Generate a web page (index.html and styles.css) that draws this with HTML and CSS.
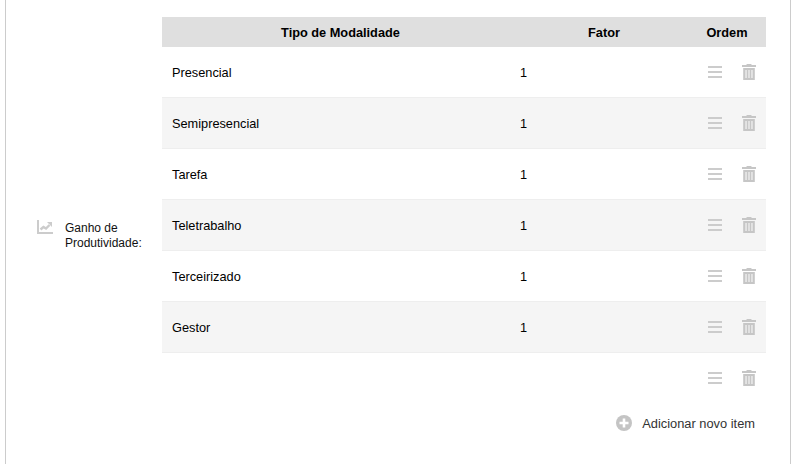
FILE: index.html
```html
<!DOCTYPE html>
<html lang="en">
<head>
    <meta charset="UTF-8">
    <meta name="viewport" content="width=device-width, initial-scale=1.0">
    <title>Ganho de Produtividade</title>
    <link rel="stylesheet" href="styles.css">
</head>
<body>
    <svg class="defs" width="0" height="0" aria-hidden="true">
        <symbol id="bars" viewBox="0 0 14 12">
            <path d="M0 0h14v2H0zM0 5h14v2H0zM0 10h14v2H0z"/>
        </symbol>
        <symbol id="trash" viewBox="0 0 14 16">
            <path d="M4.800 0h4.400l.5 1H14v2H0V1h4.300zM1.200 4h11.600v12H1.200z"/>
            <path d="M3.200 6h1.700v8H3.200zM6.150 6h1.700v8h-1.700zM9.100 6h1.700v8H9.100z" fill="#e6e6e6"/>
        </symbol>
    </svg>

    <div class="panel">
        <div class="field-label">
            <svg class="chart-icon" width="16" height="14" viewBox="0 0 16 14">
                <path d="M1 0v13h15" fill="none" stroke="#ccc" stroke-width="2"/>
                <path d="M3.500 9.500l3-2.500 2.500 1.500 3.500-3.500" fill="none" stroke="#ccc" stroke-width="2.400"/>
                <path d="M10 2h5v5z" fill="#ccc"/>
            </svg>
            <span>Ganho de Produtividade:</span>
        </div>

        <div class="grid">
            <div class="grid-head">
                <div>Tipo de Modalidade</div>
                <div>Fator</div>
                <div class="head-order">Ordem</div>
            </div>

            <div class="row">
                <div>Presencial</div>
                <div>1</div>
                <div class="actions">
                    <svg class="bars"><use href="#bars"/></svg>
                    <svg class="trash"><use href="#trash"/></svg>
                </div>
            </div>
            <div class="row alt">
                <div>Semipresencial</div>
                <div>1</div>
                <div class="actions">
                    <svg class="bars"><use href="#bars"/></svg>
                    <svg class="trash"><use href="#trash"/></svg>
                </div>
            </div>
            <div class="row">
                <div>Tarefa</div>
                <div>1</div>
                <div class="actions">
                    <svg class="bars"><use href="#bars"/></svg>
                    <svg class="trash"><use href="#trash"/></svg>
                </div>
            </div>
            <div class="row alt">
                <div>Teletrabalho</div>
                <div>1</div>
                <div class="actions">
                    <svg class="bars"><use href="#bars"/></svg>
                    <svg class="trash"><use href="#trash"/></svg>
                </div>
            </div>
            <div class="row">
                <div>Terceirizado</div>
                <div>1</div>
                <div class="actions">
                    <svg class="bars"><use href="#bars"/></svg>
                    <svg class="trash"><use href="#trash"/></svg>
                </div>
            </div>
            <div class="row alt">
                <div>Gestor</div>
                <div>1</div>
                <div class="actions">
                    <svg class="bars"><use href="#bars"/></svg>
                    <svg class="trash"><use href="#trash"/></svg>
                </div>
            </div>
            <div class="row last">
                <div></div>
                <div></div>
                <div class="actions">
                    <svg class="bars"><use href="#bars"/></svg>
                    <svg class="trash"><use href="#trash"/></svg>
                </div>
            </div>

            <div class="add-item">
                <svg class="plus" width="16" height="16" viewBox="0 0 16 16">
                    <circle cx="8" cy="8" r="8" fill="#c4c4c4"/>
                    <path d="M3.500 6.700h3.200V3.500h2.600v3.200h3.200v2.600H9.300v3.200H6.700V9.300H3.500z" fill="#fff"/>
                </svg>
                <span>Adicionar novo item</span>
            </div>
        </div>
    </div>
</body>
</html>
```

FILE: styles.css
```css
html, body {
    height: 100%;
}

body {
    margin: 0;
    background-color: #fff;
    color: #000;
    font-family: "Liberation Sans", Arial, sans-serif;
    font-size: 12.75px;
    overflow: hidden;
}

.defs {
    display: block;
    height: 0;
}

.panel {
    box-sizing: border-box;
    display: flex;
    align-items: center;
    width: 786px;
    height: 464px;
    margin-left: 5px;
    padding: 0 23px 0 31px;
    border-left: 1px solid #ccc;
    border-right: 1px solid #ccc;
}

.field-label {
    display: flex;
    align-items: flex-start;
    width: 125px;
    margin-top: 8px;
    font-size: 12px;
    line-height: 15px;
    color: #111;
}

.chart-icon {
    flex: none;
    margin: -1px 12px 0 0;
}

.field-label span {
    width: 90px;
}

.grid {
    width: 604px;
    padding-top: 17px;
    margin-bottom: auto;
}

.grid-head, .row {
    display: grid;
    grid-template-columns: 357px 170px 1fr;
    align-items: center;
}

.grid-head {
    height: 30px;
    background-color: #dfdfdf;
    font-weight: bold;
    text-align: center;
}

.head-order {
    padding-right: 1px;
}

.row {
    box-sizing: border-box;
    height: 51px;
    border-bottom: 1px solid #eee;
}

.row > div:first-child {
    padding-left: 10px;
}

.row > div:nth-child(2) {
    padding-left: 1px;
}

.row.alt {
    background-color: #f5f5f5;
}

.row.last {
    border-bottom-color: transparent;
}

.actions {
    display: flex;
    align-items: center;
    gap: 20px;
    padding-left: 19px;
}

.bars {
    width: 14px;
    height: 12px;
    fill: #ccc;
}

.trash {
    width: 14px;
    height: 16px;
    fill: #c6c6c6;
}

.add-item {
    display: flex;
    align-items: center;
    justify-content: flex-end;
    gap: 10px;
    padding: 0 11px 0 0;
    height: 38px;
    font-size: 12.85px;
    color: #333;
}

.plus {
    flex: none;
}
```
